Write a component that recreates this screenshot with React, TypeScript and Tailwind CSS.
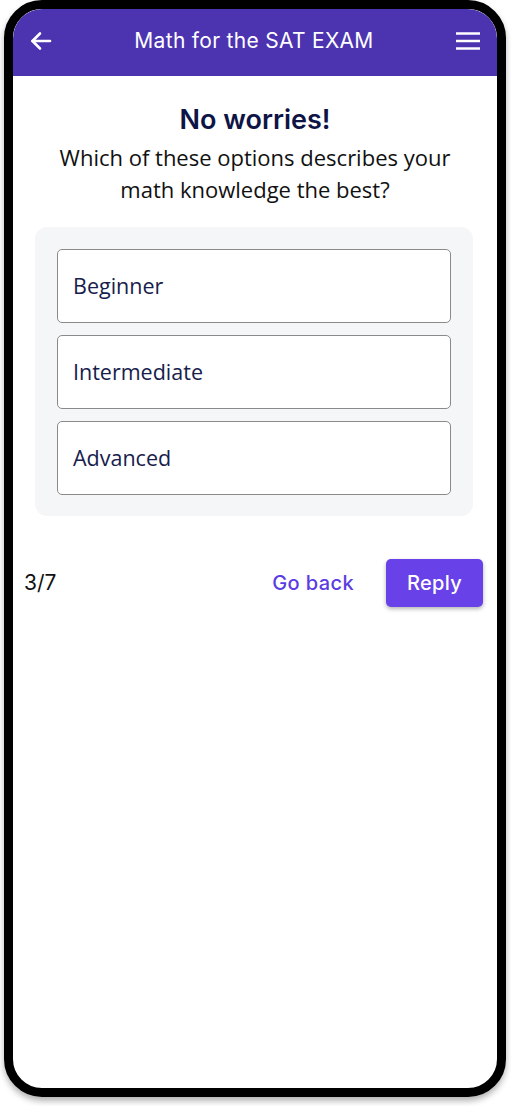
import React from "react";

const options = ["Beginner", "Intermediate", "Advanced"];

function BackArrow() {
  return (
    <svg width="24" height="24" viewBox="0 0 24 24" fill="none" stroke="white" strokeWidth="2.6" strokeLinecap="round" strokeLinejoin="round">
      <path d="M21 12H3.5" />
      <path d="M11 4.5L3.5 12L11 19.5" />
    </svg>
  );
}

function MenuIcon() {
  return (
    <svg width="26" height="20" viewBox="0 0 26 20" fill="none" stroke="white" strokeWidth="2.6">
      <path d="M1 2.5H25" />
      <path d="M1 10H25" />
      <path d="M1 17.5H25" />
    </svg>
  );
}

export default function App() {
  return (
    <div className="w-[511px] h-[1106px] bg-white">
      <div className="ml-[4px] w-[502px] h-[1097px] rounded-[38px] border-[9px] border-black bg-white shadow-[0_4px_6px_rgba(0,0,0,0.3)] overflow-hidden">
        <div className="flex h-full flex-col rounded-[29px] overflow-hidden">
          {/* app bar */}
          <header className="flex h-[67px] shrink-0 items-center justify-between bg-[#4c33b0] pl-[16px] pr-[16px] pb-[4px]">
            <BackArrow />
            <h1 className="text-[21px] font-normal tracking-[0.3px] text-white" style={{ fontFamily: "Inter, 'Open Sans', sans-serif" }}>
              Math for the SAT EXAM
            </h1>
            <MenuIcon />
          </header>

          {/* question */}
          <div className="flex flex-col items-center pt-[27px]">
            <h2 className="text-[27px] leading-[34px] font-semibold text-[#0e1446]" style={{ fontFamily: "Inter, sans-serif" }}>
              No worries!
            </h2>
            <p className="mt-[4px] text-center text-[22px] leading-[32px] text-[#111111]" style={{ fontFamily: "'Open Sans', sans-serif" }}>
              Which of these options describes your
              <br />
              math knowledge the best?
            </p>
          </div>

          <div className="ml-[22px] mt-[22px] flex w-[438px] flex-col gap-[12px] rounded-[12px] bg-[#f5f6f8] px-[22px] pt-[22px] pb-[21px]">
            {options.map((o) => (
              <button
                key={o}
                className="flex h-[74px] items-center rounded-[5px] border-[1.5px] border-[#8a8a8a] bg-white pl-[15px] text-left text-[21.5px] text-[#17204c]"
                style={{ fontFamily: "'Open Sans', sans-serif" }}
              >
                {o}
              </button>
            ))}
          </div>

          {/* footer actions */}
          <div className="mt-[43px] flex items-center pl-[11px] pr-[14px]">
            <span className="text-[21px] text-[#111111]" style={{ fontFamily: "Inter, sans-serif" }}>
              3/7
            </span>
            <div className="ml-auto flex items-center gap-[32px]">
              <button className="text-[20px] font-medium tracking-[0.4px] text-[#5a3de2]" style={{ fontFamily: "Inter, sans-serif" }}>
                Go back
              </button>
              <button
                className="flex h-[48px] w-[97px] items-center justify-center rounded-[5px] bg-[#6842e8] text-[20px] font-medium tracking-[0.3px] text-white shadow-[0_2px_4px_rgba(0,0,0,0.3)]"
                style={{ fontFamily: "Inter, sans-serif" }}
              >
                Reply
              </button>
            </div>
          </div>
        </div>
      </div>
    </div>
  );
}
